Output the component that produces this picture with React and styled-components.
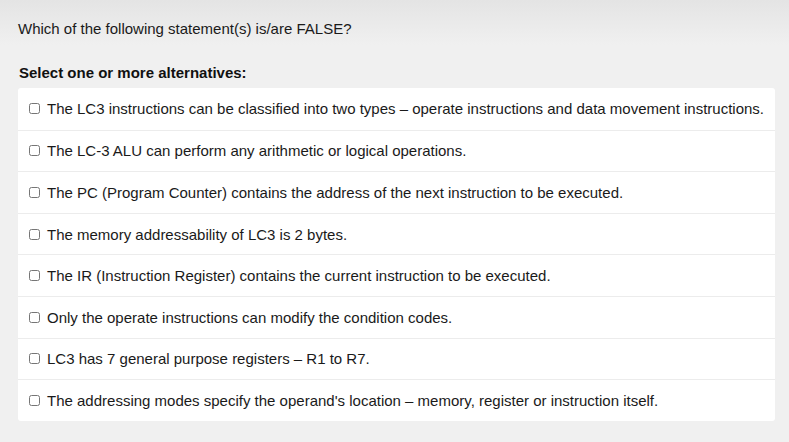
import React from "react";
import styled, { createGlobalStyle } from "styled-components";

const GlobalStyle = createGlobalStyle`
  html, body {
    margin: 0;
    padding: 0;
  }
  body {
    font-family: "Liberation Sans", Arial, sans-serif;
    font-size: 15px;
    color: #222;
    background: linear-gradient(to bottom, #e4e4e4 0px, #f0f0f0 45px, #f0f0f0 100%);
    min-height: 442px;
  }
`;

const statements = [
  "The LC3 instructions can be classified into two types \u2013 operate instructions and data movement instructions.",
  "The LC-3 ALU can perform any arithmetic or logical operations.",
  "The PC (Program Counter) contains the address of the next instruction to be executed.",
  "The memory addressability of LC3 is 2 bytes.",
  "The IR (Instruction Register) contains the current instruction to be executed.",
  "Only the operate instructions can modify the condition codes.",
  "LC3 has 7 general purpose registers \u2013 R1 to R7.",
  "The addressing modes specify the operand's location \u2013 memory, register or instruction itself.",
];

const App = () => {
  return (
    <Page>
      <GlobalStyle />
      <Question>Which of the following statement(s) is/are FALSE?</Question>
      <Prompt>Select one or more alternatives:</Prompt>
      <Card>
        {statements.map((text, i) => (
          <Option key={i}>
            <input type="checkbox" />
            <span>{text}</span>
          </Option>
        ))}
      </Card>
    </Page>
  );
};

export default App;

const Page = styled.div`
  padding: 20px 14px 0 18px;
`;

const Question = styled.p`
  margin: 0;
  line-height: 17px;
  color: #1a1a1a;
`;

const Prompt = styled.p`
  margin: 27px 0 0 1px;
  font-weight: bold;
  line-height: 17px;
  color: #111;
`;

const Card = styled.div`
  margin-top: 7px;
  width: 757px;
  background: #fff;
  border-radius: 3px;
`;

const Option = styled.label`
  display: flex;
  align-items: center;
  height: 41.6px;
  box-sizing: border-box;
  padding-left: 11px;
  border-top: 1px solid #ececec;
  color: #1a1a1a;
  &:first-child {
    border-top: 0;
  }
  input {
    width: 11px;
    height: 11px;
    margin: 0 7px 0 0;
  }
`;
